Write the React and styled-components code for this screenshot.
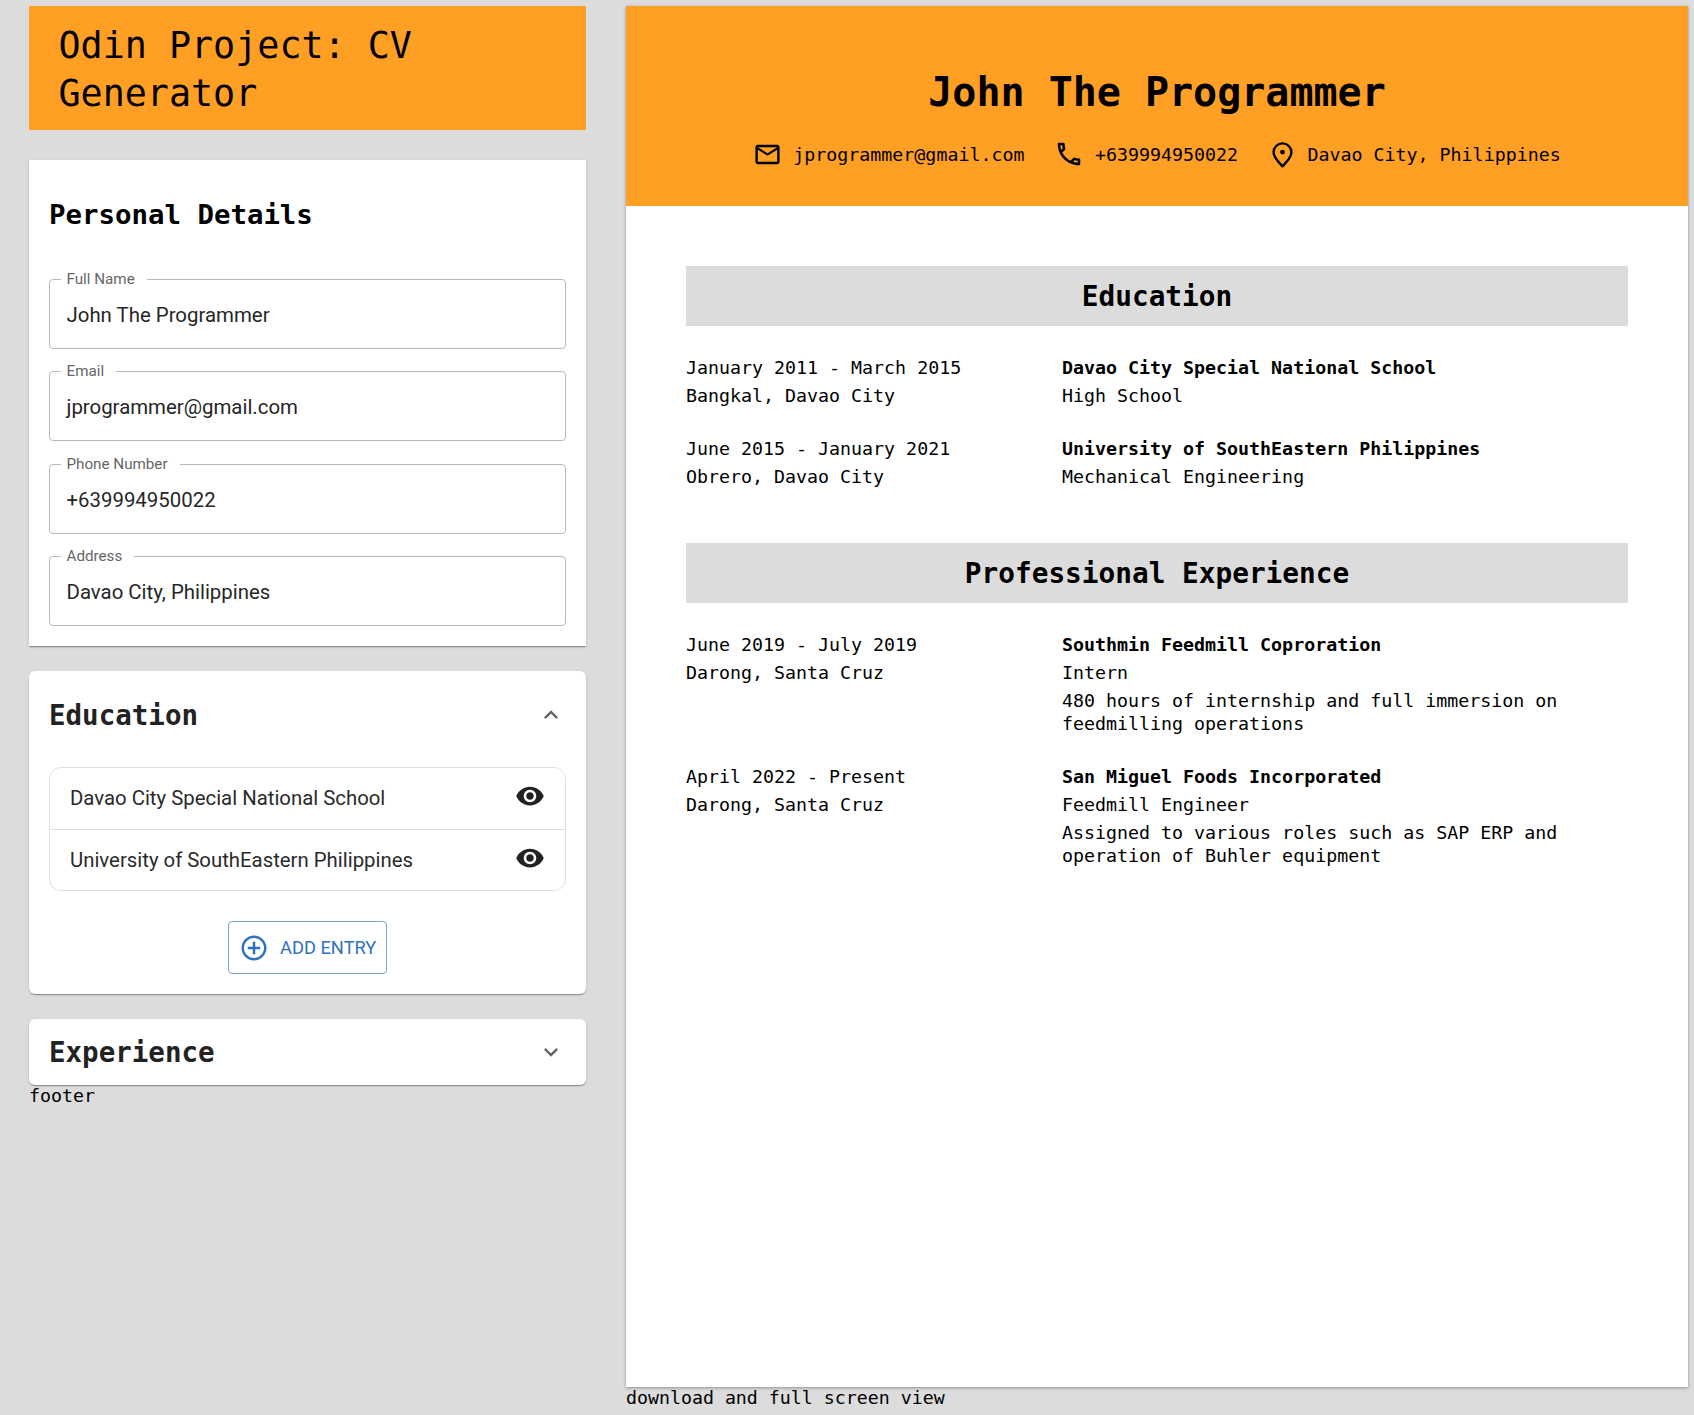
import React from "react";
import styled, { createGlobalStyle } from "styled-components";
import { MdExpandLess, MdExpandMore, MdVisibility, MdOutlineEmail, MdOutlineLocalPhone, MdOutlineAddCircleOutline } from "react-icons/md";

const mono = `"DejaVu Sans Mono", monospace`;
const Global = createGlobalStyle`
  html, body { margin: 0; padding: 0; background: #dcdcdc; }
  body { font-family: ${mono}; color: #000; }
`;
const Page = styled.div`
  display: grid; grid-template-columns: 557px 1062px; column-gap: 40px;
  padding: 6px 0 0 29px; height: 1409px; box-sizing: content-box;
`;
const Left = styled.div`display: flex; flex-direction: column;`;
const AppTitle = styled.h1`
  margin: 0 0 30px; background: #ff9f24; padding: 16px 29.5px 0; height: 124px; box-sizing: border-box;
  font-size: 36.7px; line-height: 48px; font-weight: 400; font-family: ${mono};
`;
const Card = styled.section`
  background: #fff; padding: ${p => p.$tight ? "17px 20px" : "20px"}; box-sizing: border-box; margin-bottom: ${p => p.$last ? 0 : 25}px;
  border-radius: ${p => p.$square ? 0 : 6}px;
  box-shadow: 0 2px 1px -1px rgba(0,0,0,.2), 0 1px 1px rgba(0,0,0,.14), 0 1px 3px rgba(0,0,0,.12);
`;
const PersonalTitle = styled.h2`margin: 19px 0 41px; font-size: 27.4px; line-height: 32px; font-weight: 700;`;
const Field = styled.fieldset`
  margin: 0 0 15.4px; padding: 0 16.5px; height: 77px; box-sizing: border-box; border: 1px solid #b9b9b9; border-radius: 4px;
  font-family: Roboto, sans-serif; &:last-of-type { margin-bottom: 0; }
`;
const Legend = styled.legend`padding: 0 12px 0 6px; margin-left: -6px; font-size: 15.2px; line-height: 15px; color: #666;`;
const Value = styled.div`font-size: 20.4px; line-height: 24px; color: #262626; margin-top: 16px;`;
const AccHead = styled.div`
  display: flex; align-items: center; justify-content: space-between; height: 32px; margin-top: ${p => p.$offset || 0}px; padding-right: 1px; font-size: 27.5px; font-weight: 700; color: #222;
  svg { color: #666; }
`;
const List = styled.div`
  margin-top: 36px; border: 1px solid #e0e0e0; border-radius: 12px; font-family: Roboto, sans-serif;
`;
const Item = styled.div`
  display: flex; align-items: center; justify-content: space-between; height: 60.5px; padding: 0 20px; font-size: 20.35px; color: #2a2a2a;
  & + & { border-top: 1px solid #e0e0e0; }
  svg { color: #222; margin-top: -4px; }
`;
const AddRow = styled.div`display: flex; justify-content: center; margin-top: 30px;`;
const AddBtn = styled.button`
  display: flex; align-items: center; gap: 11px; height: 53px; width: 159px; padding: 0 10px; box-sizing: border-box; background: #fff;
  border: 1px solid #7ba5d6; border-radius: 4px; color: #2f72bd; font: 400 18.3px Roboto, sans-serif; text-transform: uppercase; white-space: nowrap;
  svg { flex: none; }
`;
const Foot = styled.div`font-size: ${p => p.$wide ? 18.25 : 18.3}px; line-height: 22px;`;
const Right = styled.div`display: flex; flex-direction: column;`;
const Sheet = styled.main`
  height: 1381px; background: #fff; box-shadow: 0 1px 3px rgba(0,0,0,.35);
`;
const Banner = styled.header`
  background: #ff9f24; height: 200px; box-sizing: border-box; padding-top: 60px; display: flex; flex-direction: column; align-items: center;
`;
const Name = styled.h1`margin: 0; font-size: 40px; line-height: 52px; font-weight: 700;`;
const Contacts = styled.div`display: flex; gap: 29.5px; margin-top: 21px; font-size: 18.3px;`;
const Contact = styled.div`display: flex; align-items: center; gap: 11px;`;
const Body = styled.div`padding: 60px;`;
const SecHead = styled.h2`
  margin: 0 0 30px; height: 60px; background: #dcdcdc; display: flex; align-items: center; justify-content: center;
  font-size: 27.75px; font-weight: 700;
`;
const Entry = styled.div`
  display: grid; grid-template-columns: 376px 1fr; font-size: 18.3px; margin-bottom: 30px;
`;
const Lines = styled.div`display: flex; flex-direction: column; gap: 5px; line-height: 23px;`;
const Strong = styled.div`font-weight: 700;`;
const Section = styled.div`margin-bottom: 55px;`;

const Pin = ({ size = 29 }) => (
  <svg width={size} height={size} viewBox="0 0 24 24" fill="none" stroke="currentColor" strokeWidth="2" strokeLinejoin="round">
    <path d="M12 21.8c-3.6-3.6-7.4-7.6-7.4-11.6a7.4 7.4 0 0 1 14.8 0c0 4-3.8 8-7.4 11.6z" />
    <circle cx="12" cy="10" r="2" fill="currentColor" stroke="none" />
  </svg>
);

const edu = [
  ["January 2011 - March 2015","Bangkal, Davao City","Davao City Special National School","High School"],
  ["June 2015 - January 2021","Obrero, Davao City","University of SouthEastern Philippines","Mechanical Engineering"],
];
const exp = [
  ["June 2019 - July 2019","Darong, Santa Cruz","Southmin Feedmill Coproration","Intern","480 hours of internship and full immersion on feedmilling operations"],
  ["April 2022 - Present","Darong, Santa Cruz","San Miguel Foods Incorporated","Feedmill Engineer","Assigned to various roles such as SAP ERP and operation of Buhler equipment"],
];
const Rows = ({ rows }) => rows.map(r => (
  <Entry key={r[2]}>
    <Lines><div>{r[0]}</div><div>{r[1]}</div></Lines>
    <Lines><Strong>{r[2]}</Strong><div>{r[3]}</div>{r[4] && <div>{r[4]}</div>}</Lines>
  </Entry>
));

export default function App() {
  return (
    <Page>
      <Global />
      <Left>
        <AppTitle>Odin Project: CV Generator</AppTitle>
        <Card $square>
          <PersonalTitle>Personal Details</PersonalTitle>
          {[["Full Name","John The Programmer"],["Email","jprogrammer@gmail.com"],["Phone Number","+639994950022"],["Address","Davao City, Philippines"]].map(([l,v]) => (
            <Field key={l}><Legend>{l}</Legend><Value>{v}</Value></Field>
          ))}
        </Card>
        <Card>
          <AccHead $offset={8}>Education<MdExpandLess size={28} /></AccHead>
          <List>
            <Item>Davao City Special National School<MdVisibility size={30} /></Item>
            <Item>University of SouthEastern Philippines<MdVisibility size={30} /></Item>
          </List>
          <AddRow><AddBtn><MdOutlineAddCircleOutline size={30} />Add Entry</AddBtn></AddRow>
        </Card>
        <Card $tight $last>
          <AccHead>Experience<MdExpandMore size={28} /></AccHead>
        </Card>
        <Foot>footer</Foot>
      </Left>
      <Right>
        <Sheet>
          <Banner>
            <Name>John The Programmer</Name>
            <Contacts>
              <Contact><MdOutlineEmail size={29} />jprogrammer@gmail.com</Contact>
              <Contact><MdOutlineLocalPhone size={30} />+639994950022</Contact>
              <Contact><Pin />Davao City, Philippines</Contact>
            </Contacts>
          </Banner>
          <Body>
            <Section><SecHead>Education</SecHead><Rows rows={edu} /></Section>
            <Section><SecHead>Professional Experience</SecHead><Rows rows={exp} /></Section>
          </Body>
        </Sheet>
        <Foot $wide>download and full screen view</Foot>
      </Right>
    </Page>
  );
}
